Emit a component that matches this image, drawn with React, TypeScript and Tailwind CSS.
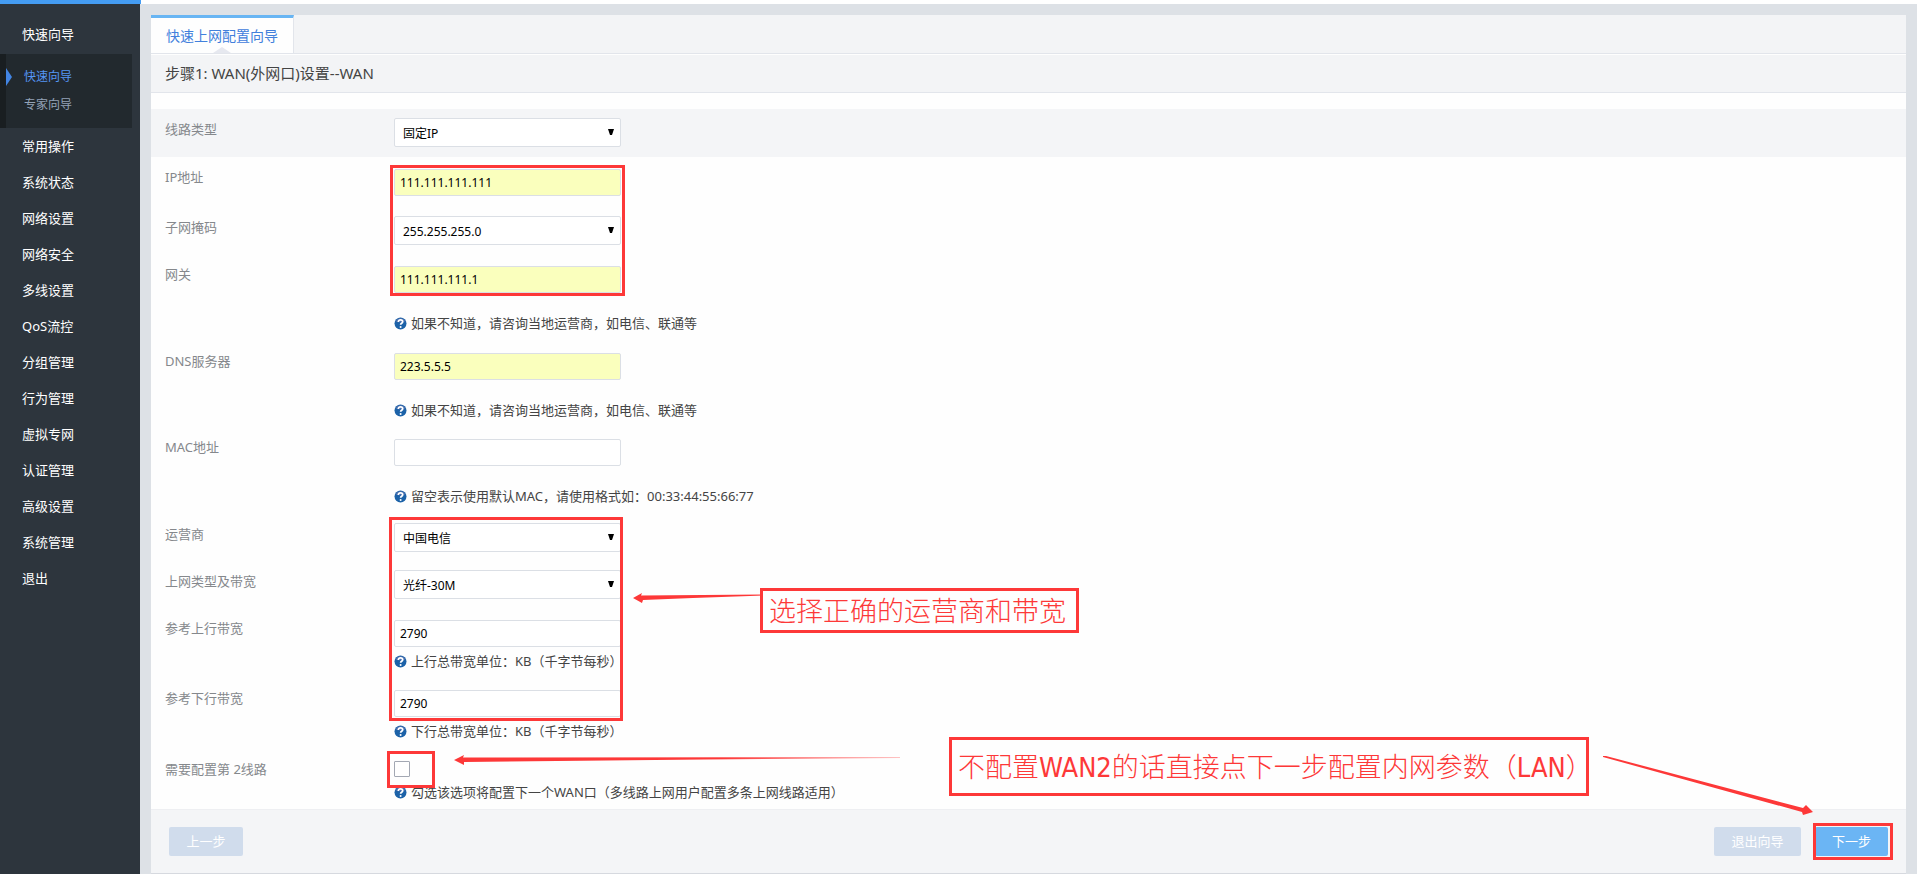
import { ReactNode } from "react";

const menuItems = [
  "常用操作",
  "系统状态",
  "网络设置",
  "网络安全",
  "多线设置",
  "QoS流控",
  "分组管理",
  "行为管理",
  "虚拟专网",
  "认证管理",
  "高级设置",
  "系统管理",
  "退出",
];

const HelpIcon = () => (
  <svg width="13" height="13" viewBox="0 0 13 13" className="shrink-0" aria-hidden="true">
    <circle cx="6.5" cy="6.5" r="6" fill="#1c62a8" />
    <path d="M1.5 4.5A5.4 5.4 0 0 1 11.5 4.5Q6.5 6.5 1.5 4.5Z" fill="#4a6fae" />
    <path
      d="M4.3 5C4.3 3.4 5.3 2.8 6.5 2.8S8.7 3.6 8.7 4.7C8.7 6.2 6.6 6.2 6.6 7.8"
      fill="none"
      stroke="#fff"
      strokeWidth="1.7"
    />
    <circle cx="6.6" cy="9.9" r="1" fill="#fff" />
  </svg>
);

const Hint = ({ children, className = "" }: { children: ReactNode; className?: string }) => (
  <p className={`flex items-center gap-1 text-[13px] leading-5 text-[#444] whitespace-nowrap ${className}`}>
    <HelpIcon />
    <span>{children}</span>
  </p>
);

type RowProps = {
  id: string;
  label: string;
  className: string;
  children: ReactNode;
};

const Row = ({ id, label, className, children }: RowProps) => (
  <div className={`flex px-3.5 ${className}`}>
    <label htmlFor={id} className="-mt-0.5 h-5 w-[229px] shrink-0 text-[13px] leading-5 text-[#85888c]">
      {label}
    </label>
    <div className="min-w-0">{children}</div>
  </div>
);

type SelectRowProps = {
  id: string;
  label: string;
  value: string;
  className?: string;
};

const SelectRow = ({ id, label, value, className = "py-[9px]" }: SelectRowProps) => (
  <div className={`flex px-3.5 ${className}`}>
    <label htmlFor={id} className="mt-px h-5 w-[229px] shrink-0 text-[13px] leading-5 text-[#85888c]">
      {label}
    </label>
    <div className="relative">
      <select
        id={id}
        className="block h-[29px] w-[227px] appearance-none rounded-[2px] border border-[#dbdfe5] bg-white pt-0.5 pl-2 text-xs text-black"
      >
        <option>{value}</option>
      </select>
      <svg width="6" height="6" viewBox="0 0 6 6" className="pointer-events-none absolute top-[11px] right-[7px]">
        <path d="M0 0H6L4 6H2Z" fill="#000" />
      </svg>
    </div>
  </div>
);

type TextFieldProps = {
  id: string;
  value: string;
  filled?: boolean;
};

const TextField = ({ id, value, filled = false }: TextFieldProps) => (
  <input
    id={id}
    type="text"
    defaultValue={value}
    className={`block h-[27px] w-[227px] rounded-[2px] border border-[#dbdfe5] pl-[5px] text-xs text-black ${
      filled ? "bg-[#faffbd]" : "bg-white"
    }`}
  />
);

const Sidebar = () => (
  <nav className="w-[140px] shrink-0 bg-[#2d353d] pt-3 text-[13px] text-white">
    <a href="#wizard" className="block h-9 pl-[22px] leading-9">
      快速向导
    </a>
    <div className="relative mt-0.5 mr-2 border-l-[6px] border-[#191e21] bg-[#22292e] py-[9px] pl-[18px] text-xs leading-7">
      <svg width="6" height="18" viewBox="0 0 6 18" className="absolute top-3.5 left-0">
        <path d="M0 0L6 9L0 18Z" fill="#4285e4" />
      </svg>
      <a href="#quick" className="block text-[#5596f5]">
        快速向导
      </a>
      <a href="#expert" className="block text-[#94a3b8]">
        专家向导
      </a>
    </div>
    {menuItems.map((item) => (
      <a key={item} href="#menu" className="block h-9 pl-[22px] leading-9">
        {item}
      </a>
    ))}
  </nav>
);

const callout =
  "absolute flex items-center border-3 border-[#fd3838] bg-[#fefefe] pt-0.5 pl-1.5 font-['DejaVu_Sans_Condensed','DejaVu_Sans','Noto_Sans_CJK_SC',sans-serif] text-[27px] font-light leading-8 whitespace-nowrap text-[#fd3838]";

export default function App() {
  return (
    <div className="flex min-h-screen flex-col bg-[#dde1e6] font-['Noto_Sans','Noto_Sans_CJK_SC',sans-serif]">
      <div className="h-1 bg-white">
        <div className="h-1 w-[141px] bg-[#449cf3]" />
      </div>
      <div className="flex flex-1">
        <Sidebar />
        <main className="min-w-0 flex-1 pt-[11px] pr-[11px] pl-[11px]">
          <div className="border-b border-[#d6d9df] bg-[#fefefe]">
            <div className="flex border-b border-[#e2e5eb] bg-[#f3f4f6]">
              <a
                href="#wizard"
                className="relative h-[38px] border-t-3 border-r border-t-[#68b5f3] border-r-[#e2e5eb] bg-[#fefefe] px-[15px] text-sm leading-9 text-[#4180dc]"
              >
                快速上网配置向导
                <svg width="18" height="6" viewBox="0 0 18 6" className="absolute bottom-0 left-[62px]">
                  <path d="M0 6L9 0L18 6Z" fill="#e6e8ef" />
                </svg>
              </a>
            </div>
            <h1 className="mt-px h-[38px] border-b border-[#e2e5eb] bg-[#f3f4f6] px-3.5 text-[15px] leading-[37px] text-[#444]">
              步骤1: WAN(外网口)设置--WAN
            </h1>

            <form onSubmit={(e) => e.preventDefault()}>
              <SelectRow id="line" label="线路类型" value="固定IP" className="mt-4 bg-[#f4f5f7] pt-[9px] pb-2.5" />

              <div className="relative">
                <Row id="ip" label="IP地址" className="pt-3 pb-[11px]">
                  <TextField id="ip" value="111.111.111.111" filled />
                </Row>
                <SelectRow id="mask" label="子网掩码" value="255.255.255.0" />
                <Row id="gateway" label="网关" className="pt-3 pb-2">
                  <TextField id="gateway" value="111.111.111.1" filled />
                  <Hint className="mt-5">如果不知道，请咨询当地运营商，如电信、联通等</Hint>
                </Row>
                <div className="pointer-events-none absolute top-2 left-[239px] h-[131px] w-[235px] border-3 border-[#fd3838]" />
              </div>

              <Row id="dns" label="DNS服务器" className="pt-3 pb-[7px]">
                <TextField id="dns" value="223.5.5.5" filled />
                <Hint className="mt-5">如果不知道，请咨询当地运营商，如电信、联通等</Hint>
              </Row>
              <Row id="mac" label="MAC地址" className="pt-3 pb-2">
                <TextField id="mac" value="" />
                <Hint className="mt-5">留空表示使用默认MAC，请使用格式如：00:33:44:55:66:77</Hint>
              </Row>

              <div className="relative">
                <SelectRow id="isp" label="运营商" value="中国电信" />
                <SelectRow id="access" label="上网类型及带宽" value="光纤-30M" />
                <Row id="up" label="参考上行带宽" className="pt-3 pb-[7px]">
                  <TextField id="up" value="2790" />
                  <Hint className="mt-1">上行总带宽单位：KB（千字节每秒）</Hint>
                </Row>
                <Row id="down" label="参考下行带宽" className="pt-3 pb-2">
                  <TextField id="down" value="2790" />
                  <Hint className="mt-1">下行总带宽单位：KB（千字节每秒）</Hint>
                </Row>
                <div className="pointer-events-none absolute top-[3px] left-[238px] h-[204px] w-[234px] border-3 border-[#fd3838]" />
                <svg width="132" height="10" viewBox="0 0 132 10" className="absolute top-[79px] left-[482px]">
                  <path d="M0 5L9 0L8 2.5L131 1.5V2.5L60 5L10 7L9 10Z" fill="#fd3838" />
                </svg>
                <div className={`${callout} top-[74px] left-[609px] h-[45px] w-[319px]`}>选择正确的运营商和带宽</div>
              </div>

              <div className="relative">
                <Row id="wan2" label="需要配置第 2线路" className="pt-3 pb-[7px]">
                  <input
                    id="wan2"
                    type="checkbox"
                    className="block size-4 appearance-none rounded-[1px] border border-[#a3a8b3] bg-white"
                  />
                  <Hint className="mt-[5px]">勾选该选项将配置下一个WAN口（多线路上网用户配置多条上网线路适用）</Hint>
                </Row>
                <div className="pointer-events-none absolute top-0.5 left-[236px] h-[37px] w-12 border-3 border-[#fd3838]" />
                <svg width="446" height="10" viewBox="0 0 446 10" className="absolute top-1.5 left-[303px]">
                  <defs>
                    <linearGradient id="fade" x1="0" x2="1">
                      <stop offset="0.6" stopColor="#fd3838" />
                      <stop offset="1" stopColor="#fd3838" stopOpacity="0.3" />
                    </linearGradient>
                  </defs>
                  <path d="M0 5L10 0L9 2.5L446 2V3L250 4.5L10 7V10Z" fill="url(#fade)" />
                </svg>
                <div className={`${callout} -top-3 right-[317px] h-[59px] w-[640px]`}>
                  不配置WAN2的话直接点下一步配置内网参数（LAN）
                </div>
                <svg width="210" height="60" viewBox="0 0 210 60" className="absolute top-[7px] right-[93px] z-10">
                  <path d="M0 0H3L200 52L203 49L210 56L200 59L199 56L0 1Z" fill="#fd3838" />
                </svg>
              </div>

              <div className="flex items-center gap-3.5 border-t border-[#eeeff2] bg-[#f4f5f7] px-[18px] py-[17px]">
                <button type="button" className="mr-auto h-[29px] w-[74px] rounded-[2px] bg-[#d0dcec] text-[13px] text-white">
                  上一步
                </button>
                <button type="button" className="h-[29px] w-[87px] rounded-[2px] bg-[#d0dcec] text-[13px] text-white">
                  退出向导
                </button>
                <div className="relative">
                  <button type="submit" className="block h-[29px] w-[73px] rounded-[2px] bg-[#6bb5f4] text-[13px] text-white">
                    下一步
                  </button>
                  <div className="pointer-events-none absolute -top-1 -right-[5px] -bottom-1 -left-0.5 border-3 border-[#fd3838]" />
                </div>
              </div>
            </form>
          </div>
        </main>
      </div>
    </div>
  );
}
